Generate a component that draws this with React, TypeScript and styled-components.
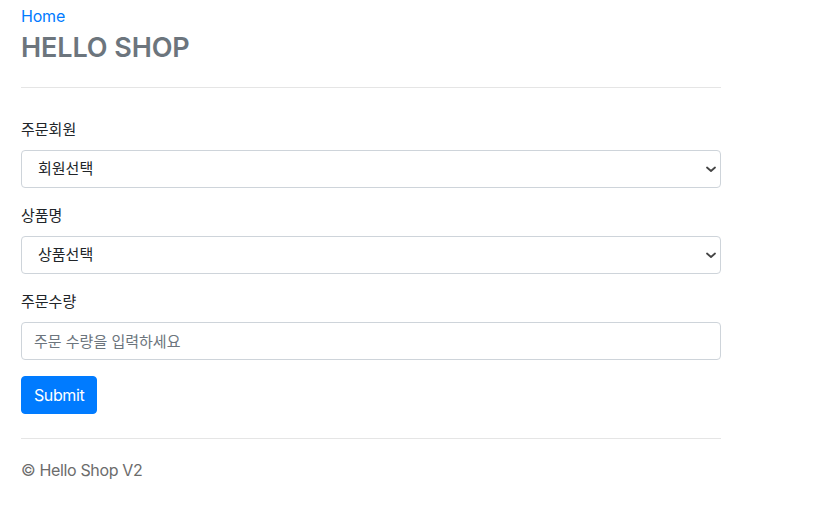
import styled, { createGlobalStyle } from 'styled-components';

const GlobalStyle = createGlobalStyle`
  body {
    margin: 0;
    background: #fff;
    color: #212529;
    font-family: Inter, "Noto Sans CJK KR", sans-serif;
    font-size: 16px;
    line-height: 1.5;
  }
`;

const Container = styled.div`
  width: 700px;
  padding: 4px 0 0 21px;
`;

const Header = styled.div`
  border-bottom: 1px solid #e5e5e5;
  padding-bottom: 19px;
  margin-bottom: 30px;

  a {
    color: #007bff;
    text-decoration: none;
    letter-spacing: -0.2px;
  }
  h3 {
    margin: 0;
    font-size: 27px;
    font-weight: 600;
    line-height: 40px;
    color: #6c757d;
    letter-spacing: -0.1px;
  }
`;

const FormGroup = styled.div`
  margin-bottom: 16px;

  label {
    display: block;
    margin-bottom: 8px;
    font-size: 15px;
    line-height: 24px;
  }
`;

const SelectWrap = styled.div`
  position: relative;

  svg {
    position: absolute;
    right: 5px;
    top: 16px;
    pointer-events: none;
  }
`;

const Field = styled.input`
  box-sizing: border-box;
  display: block;
  width: 100%;
  height: 38px;
  padding: 6px 12px;
  border: 1px solid #ced4da;
  border-radius: 4px;
  background: #fff;
  color: #495057;
  font: inherit;
  font-size: 15px;

  &::placeholder {
    color: #6c757d;
  }
`;

const Select = styled(Field).attrs({ as: 'select' })`
  appearance: none;
  padding: 6px 16px;
  color: #212529;
`;

const Button = styled.button`
  height: 38px;
  padding: 0 12px;
  border: 1px solid #007bff;
  border-radius: 4px;
  background: #007bff;
  color: #fff;
  font: inherit;
  font-size: 16px;
  letter-spacing: -0.4px;
`;

const Footer = styled.footer`
  margin-top: 24px;
  border-top: 1px solid #e5e5e5;
  padding-top: 19px;
  color: #6c6c6c;
  font-size: 16px;
  letter-spacing: -0.35px;
`;

const Chevron = () => (
  <svg width="10" height="7" viewBox="0 0 10 7">
    <path d="M1 1.5 L5 5 L9 1.5" fill="none" stroke="#444" strokeWidth="1.8" strokeLinecap="round" strokeLinejoin="round" />
  </svg>
);

const SelectField = ({ id, label, placeholder }: { id: string; label: string; placeholder: string }) => (
  <FormGroup>
    <label htmlFor={id}>{label}</label>
    <SelectWrap>
      <Select id={id} defaultValue="">
        <option value="">{placeholder}</option>
      </Select>
      <Chevron />
    </SelectWrap>
  </FormGroup>
);

export default function App() {
  return (
    <>
      <GlobalStyle />
      <Container>
        <Header>
          <a href="#">Home</a>
          <h3>HELLO SHOP</h3>
        </Header>
        <form onSubmit={(e) => e.preventDefault()}>
          <SelectField id="member" label="주문회원" placeholder="회원선택" />
          <SelectField id="item" label="상품명" placeholder="상품선택" />
          <FormGroup>
            <label htmlFor="count">주문수량</label>
            <Field id="count" type="number" placeholder="주문 수량을 입력하세요" />
          </FormGroup>
          <Button type="submit">Submit</Button>
        </form>
        <Footer>© Hello Shop V2</Footer>
      </Container>
    </>
  );
}
